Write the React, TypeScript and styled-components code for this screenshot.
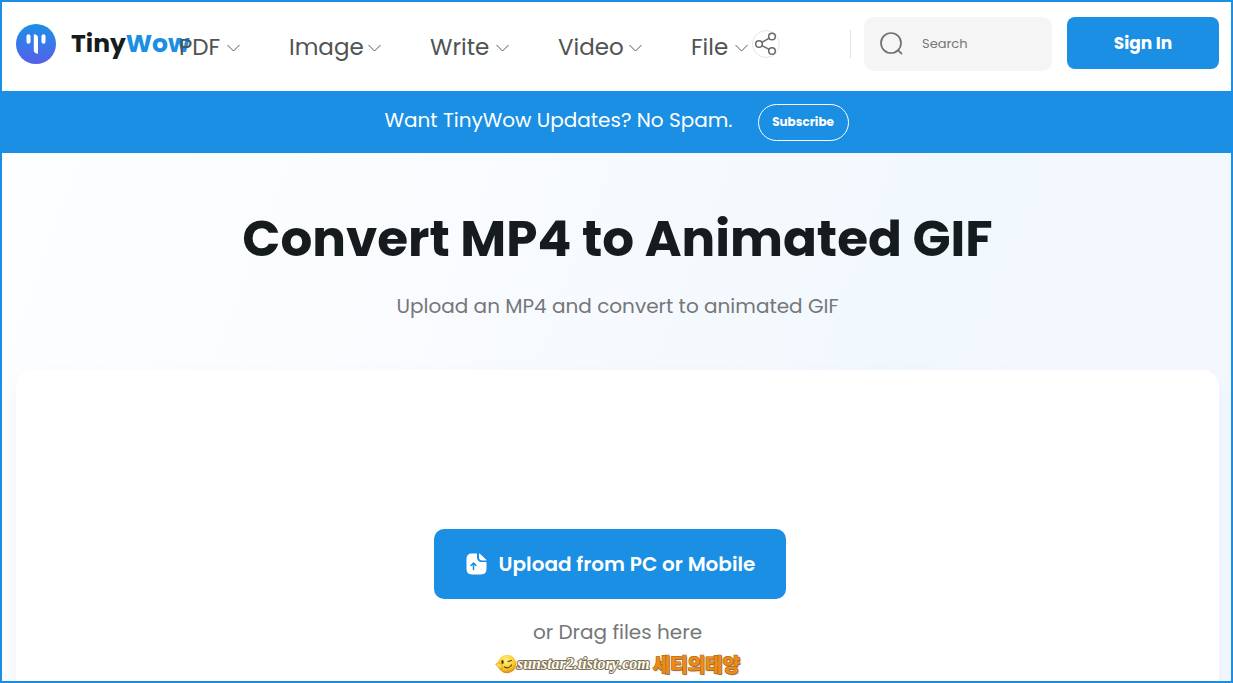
import React from "react";
import styled, { createGlobalStyle } from "styled-components";

const blue = "#1a8fe3";

const GlobalStyle = createGlobalStyle`
  *, *::before, *::after { box-sizing: border-box; }
  body {
    margin: 0;
    font-family: Poppins, Inter, "Liberation Sans", sans-serif;
    font-feature-settings: "cv11";
    color: #161b1d;
    background: #ffffff;
  }
  button, input { font: inherit; font-feature-settings: inherit; }
`;

const Page = styled.div`
  display: flex;
  flex-direction: column;
  min-height: 100vh;
  border: 2px solid ${blue};
`;

const Header = styled.header`
  display: flex;
  align-items: flex-start;
  height: 89px;
  padding: 15px 12px 0 14px;
  background: #ffffff;
`;

const Logo = styled.a`
  display: flex;
  flex: none;
  align-items: center;
  gap: 15px;
  width: 163px;
  height: 54px;
  font-size: 25px;
  font-weight: 700;
  line-height: 32px;
  white-space: nowrap;
  color: #161b1d;
  text-decoration: none;

  svg { flex: none; }
`;

const Accent = styled.span`
  color: ${blue};
`;

const Nav = styled.nav`
  display: flex;
  flex: none;
  align-items: center;
  gap: 49px;
  height: 60px;
`;

const NavLink = styled.a<{ $label: number }>`
  display: grid;
  grid-template-columns: ${(p) => p.$label}px 13px;
  column-gap: 7px;
  align-items: center;
  font-size: 23px;
  font-weight: 400;
  line-height: 32px;
  white-space: nowrap;
  color: #4f5454;
  text-decoration: none;

  svg { margin-top: 2px; }
`;

const ShareButton = styled.button`
  display: flex;
  flex: none;
  align-items: center;
  justify-content: center;
  width: 28px;
  height: 28px;
  margin: 13px 0 0 4px;
  padding: 0;
  border: 1px solid #e6e6e6;
  border-radius: 50%;
  background: #ffffff;
`;

const HeaderTools = styled.div`
  display: flex;
  flex: none;
  align-items: flex-start;
  margin-left: auto;
`;

const Divider = styled.span`
  width: 1px;
  height: 28px;
  margin: 13px 13px 0 0;
  background: #e2e2e2;
`;

const SearchBox = styled.label`
  display: flex;
  align-items: center;
  gap: 18px;
  width: 188px;
  height: 54px;
  margin-right: 15px;
  padding: 0 16px;
  border-radius: 10px;
  background: #f5f5f5;

  svg { flex: none; }
`;

const SearchInput = styled.input`
  width: 100%;
  min-width: 0;
  padding: 0;
  border: 0;
  outline: 0;
  background: transparent;
  font-size: 13px;
  line-height: 20px;
  color: #4f5454;

  &::placeholder { color: #747779; opacity: 1; }
`;

const SignIn = styled.button`
  width: 152px;
  height: 52px;
  padding: 0;
  border: 0;
  border-radius: 8px;
  background: ${blue};
  font-size: 17px;
  font-weight: 700;
  color: #ffffff;
`;

const Banner = styled.div`
  display: flex;
  align-items: center;
  justify-content: center;
  gap: 25px;
  height: 62px;
  background: ${blue};
  font-size: 20px;
  line-height: 28px;
  color: #ffffff;
`;

const BannerText = styled.p`
  margin: 0 0 4px;
`;

const Subscribe = styled.button`
  width: 91px;
  height: 37px;
  padding: 0;
  border: 1px solid #ffffff;
  border-radius: 19px;
  background: transparent;
  font-size: 12px;
  font-weight: 700;
  color: #ffffff;
`;

const Main = styled.main`
  display: flex;
  flex: 1;
  flex-direction: column;
  padding: 50px 12px 0 14px;
  background: linear-gradient(110deg, #fdfeff 0%, #f9fbfe 35%, #f1f8fd 68%, #f5f8fe 100%);
`;

const Title = styled.h1`
  margin: 0;
  font-size: 50px;
  font-weight: 700;
  line-height: 72px;
  text-align: center;
`;

const Subtitle = styled.p`
  margin: 17px 0 0;
  font-size: 20px;
  line-height: 28px;
  text-align: center;
  color: #747779;
`;

const UploadCard = styled.section`
  display: flex;
  flex: 1;
  flex-direction: column;
  align-items: center;
  margin-top: 50px;
  padding-top: 159px;
  border-radius: 16px 16px 0 0;
  background: #ffffff;
  box-shadow: 0 10px 20px rgba(26, 80, 130, 0.06);
`;

const UploadButton = styled.button`
  display: flex;
  align-items: center;
  justify-content: center;
  gap: 12px;
  width: 352px;
  height: 70px;
  margin-right: 15px;
  padding: 0;
  border: 0;
  border-radius: 10px;
  background: ${blue};
  font-size: 20px;
  font-weight: 600;
  white-space: nowrap;
  color: #ffffff;
`;

const DragText = styled.p`
  margin: 19px 0 0;
  font-size: 20px;
  line-height: 28px;
  color: #747779;
`;

const Signature = styled.footer`
  display: flex;
  align-items: center;
  height: 24px;
  margin-top: 6px;
  margin-bottom: 5px;
`;

const SiteName = styled.span`
  font-family: "Liberation Serif", serif;
  font-size: 16px;
  font-style: italic;
  font-weight: 700;
  line-height: 20px;
  color: #fffdf4;
  -webkit-text-stroke: 2px #7a6d50;
  paint-order: stroke fill;
`;

const AuthorName = styled.span`
  margin-left: 3px;
  font-family: "Noto Sans CJK KR", sans-serif;
  font-size: 19px;
  font-weight: 900;
  line-height: 24px;
  color: #ee8c12;
  -webkit-text-stroke: 1px #a85008;
  paint-order: stroke fill;
  text-shadow: 1px 1px 1px #8a6a45;
`;

const LogoMark = () => (
  <svg width="40" height="40" viewBox="0 0 40 40" aria-hidden="true">
    <defs>
      <linearGradient id="mark" x1="0" y1="0" x2="0" y2="1">
        <stop offset="0" stopColor="#1a8fe3" />
        <stop offset="0.55" stopColor="#3c76ea" />
        <stop offset="1" stopColor="#5560e6" />
      </linearGradient>
    </defs>
    <circle cx="20" cy="20" r="20" fill="url(#mark)" />
    <g fill="#ffffff">
      <rect x="10.500" y="10.300" width="4" height="9.400" rx="2" />
      <path d="M17.800 10.300c2.700 0 4.200 1.200 4.200 3.700v15.800c-2.400 0-4.200-1.300-4.200-3.500z" />
      <rect x="25.500" y="10.300" width="4" height="9.400" rx="2" />
    </g>
  </svg>
);

const Chevron = () => (
  <svg width="13" height="8" viewBox="0 0 13 8" fill="none" stroke="#555a5a" strokeWidth="1" aria-hidden="true">
    <path d="M.5 1l6 6 6-6" />
  </svg>
);

const ShareIcon = () => (
  <svg width="22" height="24" viewBox="0 0 22 24" fill="none" stroke="#66696a" strokeWidth="1.500" aria-hidden="true">
    <circle cx="4" cy="12" r="3.300" />
    <circle cx="17" cy="4.500" r="3.300" />
    <circle cx="17" cy="19" r="3.300" />
    <path d="M7 10.300l7.200-4.100M7 13.700l7.200 3.700" />
  </svg>
);

const SearchIcon = () => (
  <svg width="24" height="24" viewBox="0 0 24 24" fill="none" stroke="#6d7071" strokeWidth="1.700" strokeLinecap="round" aria-hidden="true">
    <circle cx="11" cy="11" r="10" />
    <path d="M18.500 18.700l3 3" />
  </svg>
);

const UploadIcon = () => (
  <svg width="22" height="22" viewBox="0 0 22 22" aria-hidden="true">
    <path fill="#ffffff" d="M7 .5h5v3.800c0 3.200 1.700 4.700 4.700 4.700H21.500v6.800c0 3.700-2 5.700-5.500 5.700H7c-3.500 0-5.500-2-5.500-5.700V6.200C1.500 2.500 3.500.5 7 .5z" />
    <path fill="#ffffff" d="M14 .9c0-.5.600-.6.900-.2l6.400 6.100c.3.300.1.700-.3.700h-3.500c-2.200 0-3.500-1.100-3.500-3.200z" />
    <path d="M8.500 16.500v-6M6 12.500l2.500-2.400 2.500 2.400" fill="none" stroke="#1a8fe3" strokeWidth="1.500" strokeLinecap="round" strokeLinejoin="round" />
  </svg>
);

const WinkFace = () => (
  <svg width="22" height="20" viewBox="0 0 22 20" aria-hidden="true">
    <defs>
      <radialGradient id="face" cx="0.45" cy="0.3" r="0.75">
        <stop offset="0" stopColor="#fff17a" />
        <stop offset="0.65" stopColor="#f8c62c" />
        <stop offset="1" stopColor="#c77e0c" />
      </radialGradient>
    </defs>
    <circle cx="12" cy="10" r="9.300" fill="url(#face)" />
    <path d="M.8 10.500c1.500-2.500 4.500-2 6 .5l1 3c-2 1-4 0-7-3.500z" fill="#ffd940" stroke="#c58a12" strokeWidth=".6" />
    <ellipse cx="7.500" cy="8" rx="1.200" ry="2" fill="#4b3209" />
    <path d="M13 7.500l3.500-1M9.500 13c3 1.500 5.500.5 7-2" fill="none" stroke="#5c3d09" strokeWidth="1.200" strokeLinecap="round" />
  </svg>
);

const menus = [
  { name: "PDF", label: 41 },
  { name: "Image", label: 72 },
  { name: "Write", label: 59 },
  { name: "Video", label: 64 },
  { name: "File", label: 37 },
];

export default function App() {
  return (
    <>
      <GlobalStyle />
      <Page>
        <Header>
          <Logo href="#">
            <LogoMark />
            <span>Tiny<Accent>Wow</Accent></span>
          </Logo>
          <Nav>
            {menus.map((menu) => (
              <NavLink key={menu.name} href="#" $label={menu.label}>
                <span>{menu.name}</span>
                <Chevron />
              </NavLink>
            ))}
          </Nav>
          <ShareButton aria-label="Share">
            <ShareIcon />
          </ShareButton>
          <HeaderTools>
            <Divider />
            <SearchBox>
              <SearchIcon />
              <SearchInput type="text" placeholder="Search" aria-label="Search" />
            </SearchBox>
            <SignIn>Sign In</SignIn>
          </HeaderTools>
        </Header>
        <Banner>
          <BannerText>Want TinyWow Updates? No Spam.</BannerText>
          <Subscribe>Subscribe</Subscribe>
        </Banner>
        <Main>
          <Title>Convert MP4 to Animated GIF</Title>
          <Subtitle>Upload an MP4 and convert to animated GIF</Subtitle>
          <UploadCard>
            <UploadButton>
              <UploadIcon />
              Upload from PC or Mobile
            </UploadButton>
            <DragText>or Drag files here</DragText>
            <Signature>
              <WinkFace />
              <SiteName>sunstar2.tistory.com</SiteName>
              <AuthorName>세티의태양</AuthorName>
            </Signature>
          </UploadCard>
        </Main>
      </Page>
    </>
  );
}
